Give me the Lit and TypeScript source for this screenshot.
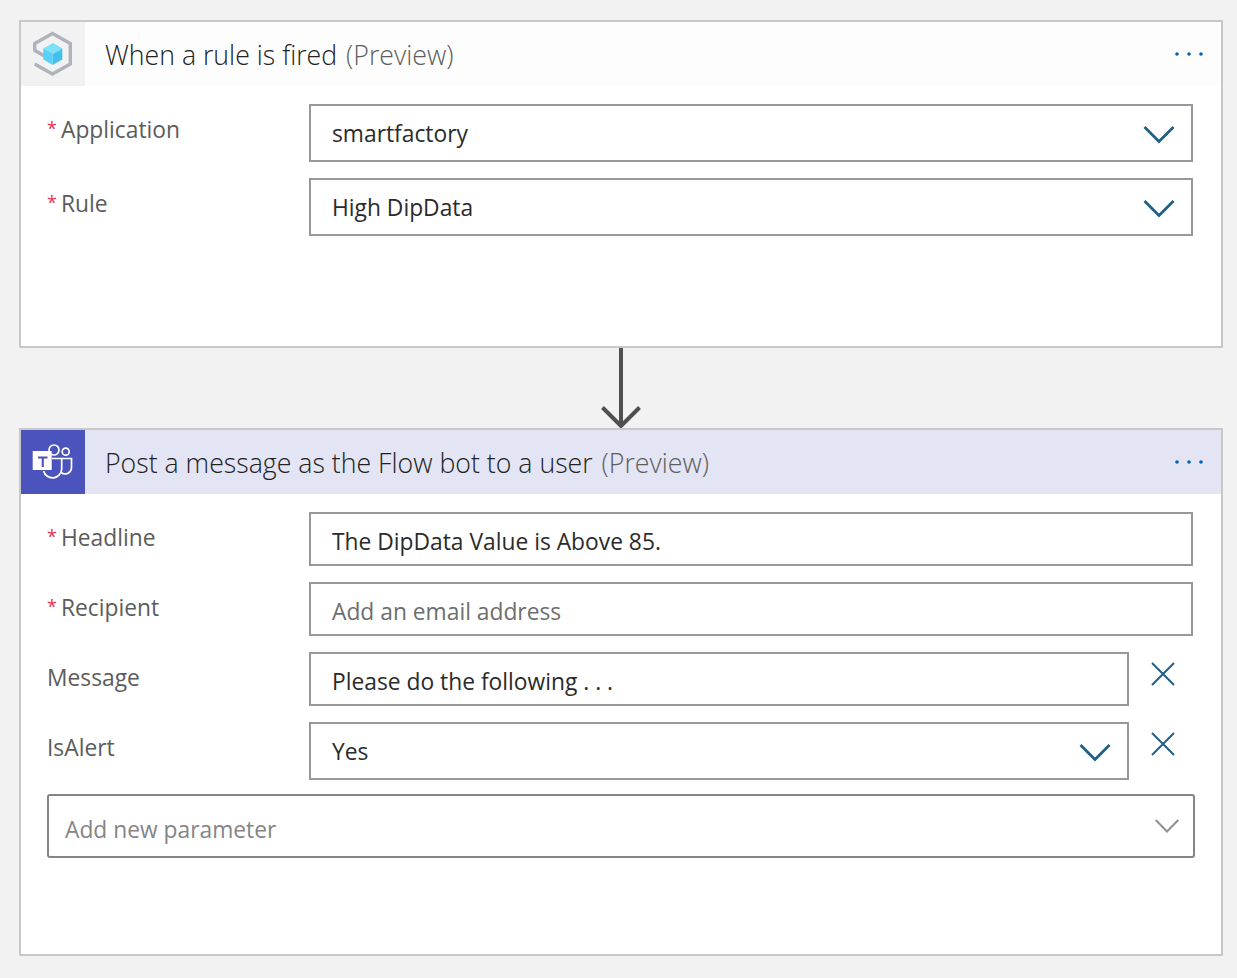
import {LitElement, html, css, svg} from 'lit';
import {customElement, property} from 'lit/decorators.js';

const chevron = (cls: string) => html`<svg class="chev ${cls}" viewBox="0 0 32 20"><path d="M1.5 2 L16 16.5 L30.5 2"/></svg>`;
const more = html`<svg class="more" viewBox="0 0 30 6"><circle cx="3" cy="3" r="1.8"/><circle cx="15" cy="3" r="1.8"/><circle cx="27" cy="3" r="1.8"/></svg>`;
const close = html`<button class="remove"><svg viewBox="0 0 24 24"><path d="M1 1 L23 23 M23 1 L1 23"/></svg></button>`;

const cubeIcon = svg`
  <path d="M3.7 19.5 V12.5 L21.5 2.5 L39.3 12.5 V33 L21.5 43 L3.7 33" fill="none" stroke="#afb3bb" stroke-width="3.4"/>
  <path d="M3 19 L13.5 25" fill="none" stroke="#afb3bb" stroke-width="3.4"/>
  <path d="M21.8 12.3 L31.3 17.8 V28.5 L21.8 34 Z" fill="#45c0ee"/>
  <path d="M21.8 12.3 L12.3 17.8 V28.5 L21.8 34 Z" fill="#5ad0f7"/>
  <path d="M21.8 12.3 L31.3 17.8 L21.8 23.3 L12.3 17.8 Z" fill="#7ee0fb"/>
`;

const teamsIcon = svg`
  <g fill="none" stroke="#fff" stroke-width="1.7">
    <circle cx="23" cy="11" r="5"/>
    <circle cx="34.7" cy="12.7" r="3.5"/>
    <path d="M21 19.5 H30.7 V30 A9.2 9.2 0 0 1 12.6 32"/>
    <path d="M30.7 19.5 H40.5 V28 A6.5 6.5 0 0 1 30 33.5"/>
  </g>
  <rect x="1.7" y="12" width="19" height="19" fill="#fff"/>
  <path d="M7 17.5 H16.5 V19.6 H12.8 V28 H10.7 V19.6 H7 Z" fill="#4b53bc"/>
`;

@customElement('flow-field')
export class FlowField extends LitElement {
  @property() label = '';
  @property() value = '';
  @property({type: Boolean}) required = false;
  @property({type: Boolean}) dropdown = false;
  @property({type: Boolean}) placeholder = false;
  @property({type: Boolean}) removable = false;

  static styles = css`
    :host {
      display: grid;
      grid-template-columns: 262px 1fr;
      color: #5c5c5c;
      font-size: 22.8px;
    }
    .label {
      line-height: 30px;
      padding-top: 11px;
    }
    .star {
      color: #e8344e;
      font-size: 18px;
      line-height: 0;
      display: inline-block;
      width: 14px;
      vertical-align: 3px;
    }
    .row {
      display: flex;
    }
    .input {
      flex: 1;
      box-sizing: border-box;
      height: 54px;
      border: 2px solid #989898;
      background: #fff;
      display: flex;
      align-items: center;
      justify-content: space-between;
      padding: 4px 16px 0 21px;
      color: #2b2b2b;
      font-size: 22.8px;
    }
    .dropdown {
      height: 58px;
      padding-top: 0;
    }
    .placeholder {
      color: #6e6e6e;
    }
    .chev {
      width: 32px;
      height: 20px;
      fill: none;
      stroke: #215f84;
      stroke-width: 2.8;
      margin-top: 3px;
    }
    .remove {
      flex: none;
      width: 64px;
      height: 44px;
      padding: 0 0 0 22px;
      border: 0;
      background: none;
      display: flex;
      align-items: center;
    }
    .remove svg {
      width: 24px;
      height: 24px;
      fill: none;
      stroke: #215f84;
      stroke-width: 2;
    }
  `;

  render() {
    return html`
      <div class="label">${this.required ? html`<span class="star">*</span>` : ''}${this.label}</div>
      <div class="row">
        <div class="input ${this.dropdown ? 'dropdown' : ''} ${this.placeholder ? 'placeholder' : ''}">
          <span>${this.value}</span>
          ${this.dropdown ? chevron('') : ''}
        </div>
        ${this.removable ? close : ''}
      </div>
    `;
  }
}

@customElement('app-root')
export class AppRoot extends LitElement {
  static styles = css`
    :host {
      display: block;
      box-sizing: border-box;
      width: 1237px;
      height: 978px;
      padding: 20px 14px 0 19px;
      background: #f2f2f2;
      font-family: "Open Sans", "Noto Sans", sans-serif;
    }
    .card {
      box-sizing: border-box;
      border: 2px solid #c8c8c8;
      background: #fff;
    }
    .trigger {
      height: 328px;
    }
    .action {
      height: 528px;
    }
    .head {
      display: flex;
      align-items: center;
      height: 64px;
      background: #fdfdfd;
      color: #222;
      font-size: 26.7px;
      font-weight: 300;
    }
    .action .head {
      background: #e3e5f4;
    }
    .logo {
      flex: none;
      width: 64px;
      height: 64px;
      display: flex;
      align-items: center;
      justify-content: center;
      background: #f2f2f2;
      margin-right: 20px;
    }
    .action .logo {
      background: #4b53bc;
    }
    .logo svg {
      width: 44px;
      height: 46px;
    }
    .title {
      flex: 1;
      margin-top: 1px;
    }
    .title span {
      color: #5e5e5e;
      margin-left: 2px;
    }
    .more {
      width: 30px;
      height: 6px;
      fill: #0562b5;
      margin-right: 17px;
      margin-top: 0;
    }
    .body {
      display: flex;
      flex-direction: column;
      gap: 16px;
      padding: 18px 28px 0 26px;
    }
    .connector {
      height: 80px;
      display: flex;
      justify-content: center;
    }
    .connector svg {
      width: 40px;
      height: 80px;
      fill: none;
      stroke: #505050;
    }
    .param {
      box-sizing: border-box;
      height: 64px;
      margin: -2px -2px 0 0;
      border: 2px solid #858585;
      border-radius: 3px;
      padding: 6px 14px 0 16px;
      display: flex;
      align-items: center;
      justify-content: space-between;
      color: #858585;
      font-size: 22.8px;
    }
    .param .chev {
      width: 24px;
      height: 14px;
      fill: none;
      stroke: #909090;
      stroke-width: 2;
      margin: -6px 0 0;
    }
  `;

  render() {
    return html`
      <section class="card trigger">
        <header class="head">
          <div class="logo"><svg viewBox="0 0 44 46">${cubeIcon}</svg></div>
          <div class="title">When a rule is fired <span>(Preview)</span></div>
          ${more}
        </header>
        <div class="body">
          <flow-field required dropdown label="Application" value="smartfactory"></flow-field>
          <flow-field required dropdown label="Rule" value="High DipData"></flow-field>
        </div>
      </section>
      <div class="connector">
        <svg viewBox="0 0 40 80">
          <path d="M20 0 V77" stroke-width="4"/>
          <path d="M1.5 59.5 L20 78 L38.5 59.5" stroke-width="4"/>
        </svg>
      </div>
      <section class="card action">
        <header class="head">
          <div class="logo"><svg viewBox="0 0 44 46">${teamsIcon}</svg></div>
          <div class="title">Post a message as the Flow bot to a user <span>(Preview)</span></div>
          ${more}
        </header>
        <div class="body">
          <flow-field required label="Headline" value="The DipData Value is Above 85."></flow-field>
          <flow-field required placeholder label="Recipient" value="Add an email address"></flow-field>
          <flow-field removable label="Message" value="Please do the following . . ."></flow-field>
          <flow-field removable dropdown label="IsAlert" value="Yes"></flow-field>
          <div class="param">
            <span>Add new parameter</span>
            <svg class="chev" viewBox="0 0 24 14"><path d="M0.7 1 L12 12.5 L23.3 1"/></svg>
          </div>
        </div>
      </section>
    `;
  }
}
